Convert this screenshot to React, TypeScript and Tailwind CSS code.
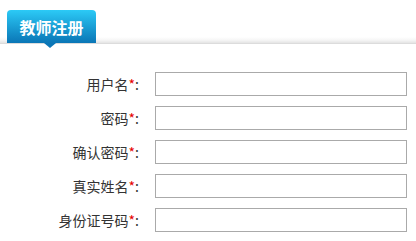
import React from 'react'

const fields = ['用户名', '密码', '确认密码', '真实姓名', '身份证号码']

function Header() {
  return (
    <div className="h-[44px] pt-[10px] pl-[7px] border-b border-[#dcdcdc] bg-[linear-gradient(180deg,#ffffff_37px,#f6f6f6_40px,#e4e4e4_43px)]">
      <div className="relative w-[89px] h-[33px] rounded-t-[4px] bg-gradient-to-b from-[#2ccaf6] to-[#0b76b6] flex items-center justify-center">
        <span className="text-white font-bold text-[16px] leading-none">教师注册</span>
        {/* little pointer under the tab */}
        <div className="absolute left-[37px] top-full w-0 h-0 border-l-[6px] border-r-[6px] border-t-[5px] border-l-transparent border-r-transparent border-t-[#0b76b6]" />
      </div>
    </div>
  )
}

export default function App() {
  return (
    <div
      className="w-[416px] h-[241px] bg-white overflow-hidden"
      style={{ fontFamily: '"Noto Sans CJK SC", "Liberation Sans", sans-serif' }}
    >
      <Header />
      <div className="flex flex-col gap-[10px] pt-[28px]">
        {fields.map((f) => (
          <div key={f} className="flex items-center gap-[16px] h-[24px]">
            <label className="w-[139px] text-right text-[14px] leading-none text-[#333]">
              {f}
              <span className="text-[#e60000]">*</span>:
            </label>
            <input
              className="w-[252px] h-[24px] border border-[#aaaaaa] outline-none"
              type={f.includes('密码') ? 'password' : 'text'}
            />
          </div>
        ))}
      </div>
    </div>
  )
}
